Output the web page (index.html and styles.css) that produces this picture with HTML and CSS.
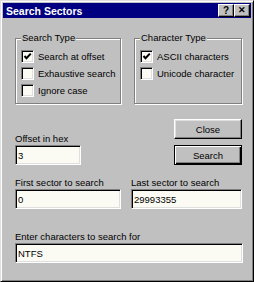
FILE: index.html
```html
<!DOCTYPE html>
<html lang="en">
<head>
    <meta charset="UTF-8" />
    <title>Search Sectors</title>
    <link rel="stylesheet" href="styles.css">
</head>
<body>
    <div class="window">
        <!-- Caption bar -->
        <div class="titlebar">
            <span class="title">Search Sectors</span>
            <div class="caption-buttons">
                <span class="cap-btn">?</span>
                <span class="cap-btn cap-close">&#x2715;</span>
            </div>
        </div>

        <div class="dialog">
            <!-- Option groups -->
            <div class="groups">
                <fieldset class="group group-search">
                    <legend>Search Type</legend>
                    <div class="check">
                        <span class="box"><svg width="9" height="9" viewBox="0 0 9 9"><path d="M1.5 4 L3.5 6.2 L7.8 1.6" fill="none" stroke="#000" stroke-width="2"/></svg></span>
                        Search at offset
                    </div>
                    <div class="check"><span class="box"></span>Exhaustive search</div>
                    <div class="check"><span class="box"></span>Ignore case</div>
                </fieldset>

                <fieldset class="group group-chars">
                    <legend>Character Type</legend>
                    <div class="check">
                        <span class="box"><svg width="9" height="9" viewBox="0 0 9 9"><path d="M1.5 4 L3.5 6.2 L7.8 1.6" fill="none" stroke="#000" stroke-width="2"/></svg></span>
                        ASCII characters
                    </div>
                    <div class="check"><span class="box"></span>Unicode character</div>
                </fieldset>
            </div>

            <!-- Offset + buttons -->
            <div class="row row-offset">
                <div class="field field-offset">
                    <label for="offset">Offset in hex</label>
                    <input type="text" id="offset" value="3" />
                </div>
                <div class="buttons">
                    <button class="btn">Close</button>
                    <button class="btn btn-default">Search</button>
                </div>
            </div>

            <!-- Sector range -->
            <div class="row row-sectors">
                <div class="field field-first">
                    <label for="first">First sector to search</label>
                    <input type="text" id="first" value="0" />
                </div>
                <div class="field field-last">
                    <label for="last">Last sector to search</label>
                    <input type="text" id="last" value="29993355" />
                </div>
            </div>

            <div class="field field-text">
                <label for="text">Enter characters to search for</label>
                <input type="text" id="text" value="NTFS" />
            </div>
        </div>
    </div>
</body>
</html>
```

FILE: styles.css
```css
/* Reset */
body {
    margin: 0;
    padding: 0;
    background: #c0c0c0;
    font-family: "Liberation Sans", Arial, sans-serif;
    font-size: 9.5px;
    color: #000;
}

/* Outer window frame */
.window {
    width: 254px;
    height: 282px;
    box-sizing: border-box;
    padding: 2px;
    background: #c0c0c0;
    border: 1px solid;
    border-color: #dfdfdf #000 #000 #dfdfdf;
    box-shadow: inset 1px 1px #fff, inset -1px -1px #808080;
}

/* Caption bar */
.titlebar {
    height: 15px;
    background: #000080;
    display: flex;
    align-items: center;
    justify-content: space-between;
    padding: 0 1px 0 3px;
}

.title {
    color: #fff;
    font-weight: bold;
    font-size: 10.5px;
}

.caption-buttons {
    display: flex;
}

.cap-btn {
    width: 16px;
    height: 13px;
    box-sizing: border-box;
    display: flex;
    align-items: center;
    justify-content: center;
    background: #c0c0c0;
    border: 1px solid;
    border-color: #fff #000 #000 #fff;
    box-shadow: inset -1px -1px #808080;
    font-weight: bold;
    font-size: 10px;
    line-height: 1;
}

.cap-close {
    font-size: 9px;
}

/* Dialog body */
.dialog {
    width: 227px;
    margin: 14px 0 0 12px;
}

.groups {
    display: flex;
    gap: 13px;
}

/* Etched group boxes */
.group {
    margin: 0;
    padding: 6px 4px 6px 5px;
    border: 1px solid #808080;
    box-shadow: inset 1px 1px #fff, 1px 1px #fff;
    display: flex;
    flex-direction: column;
    gap: 4px;
}

.group legend {
    padding: 0 1px;
    line-height: 12px;
    background: #c0c0c0;
}

.group-search {
    width: 106px;
    box-sizing: border-box;
}

.group-chars {
    width: 108px;
    box-sizing: border-box;
}

.check {
    display: flex;
    align-items: center;
    height: 13px;
    gap: 4px;
    white-space: nowrap;
}

.box {
    width: 13px;
    height: 13px;
    box-sizing: border-box;
    flex-shrink: 0;
    display: flex;
    align-items: center;
    justify-content: center;
    background: #fbfbf4;
    border: 1px solid;
    border-color: #808080 #fff #fff #808080;
    box-shadow: inset 1px 1px #000, inset -1px -1px #dfdfdf;
}

/* Rows of fields */
.row {
    display: flex;
    justify-content: space-between;
}

.row-offset {
    margin-top: 15px;
    align-items: flex-end;
}

.row-sectors {
    margin-top: 12px;
}

.field label {
    display: block;
    line-height: 12px;
    white-space: nowrap;
}

.field input {
    display: block;
    box-sizing: border-box;
    width: 100%;
    height: 20px;
    margin: 0;
    padding: 0 2px;
    font-family: inherit;
    font-size: 9.5px;
    color: #000;
    background: #fbfbf4;
    border: 1px solid;
    border-color: #808080 #fff #fff #808080;
    box-shadow: inset 1px 1px #000, inset -1px -1px #dfdfdf;
    outline: none;
}

.field-offset {
    width: 66px;
}

.field-first {
    width: 106px;
}

.field-last {
    width: 111px;
}

.field-text {
    margin-top: 22px;
    width: 228px;
}

/* Push buttons */
.buttons {
    display: flex;
    flex-direction: column;
    gap: 6px;
}

.btn {
    width: 68px;
    height: 20px;
    margin: 0;
    padding: 0;
    font-family: inherit;
    font-size: 9.5px;
    color: #000;
    background: #c0c0c0;
    border: 1px solid;
    border-color: #fff #000 #000 #fff;
    box-shadow: inset -1px -1px #808080, inset 1px 1px #dfdfdf;
}

.btn-default {
    border-color: #000;
    box-shadow: inset 1px 1px #fff, inset -1px -1px #000, inset -2px -2px #808080;
}
```
